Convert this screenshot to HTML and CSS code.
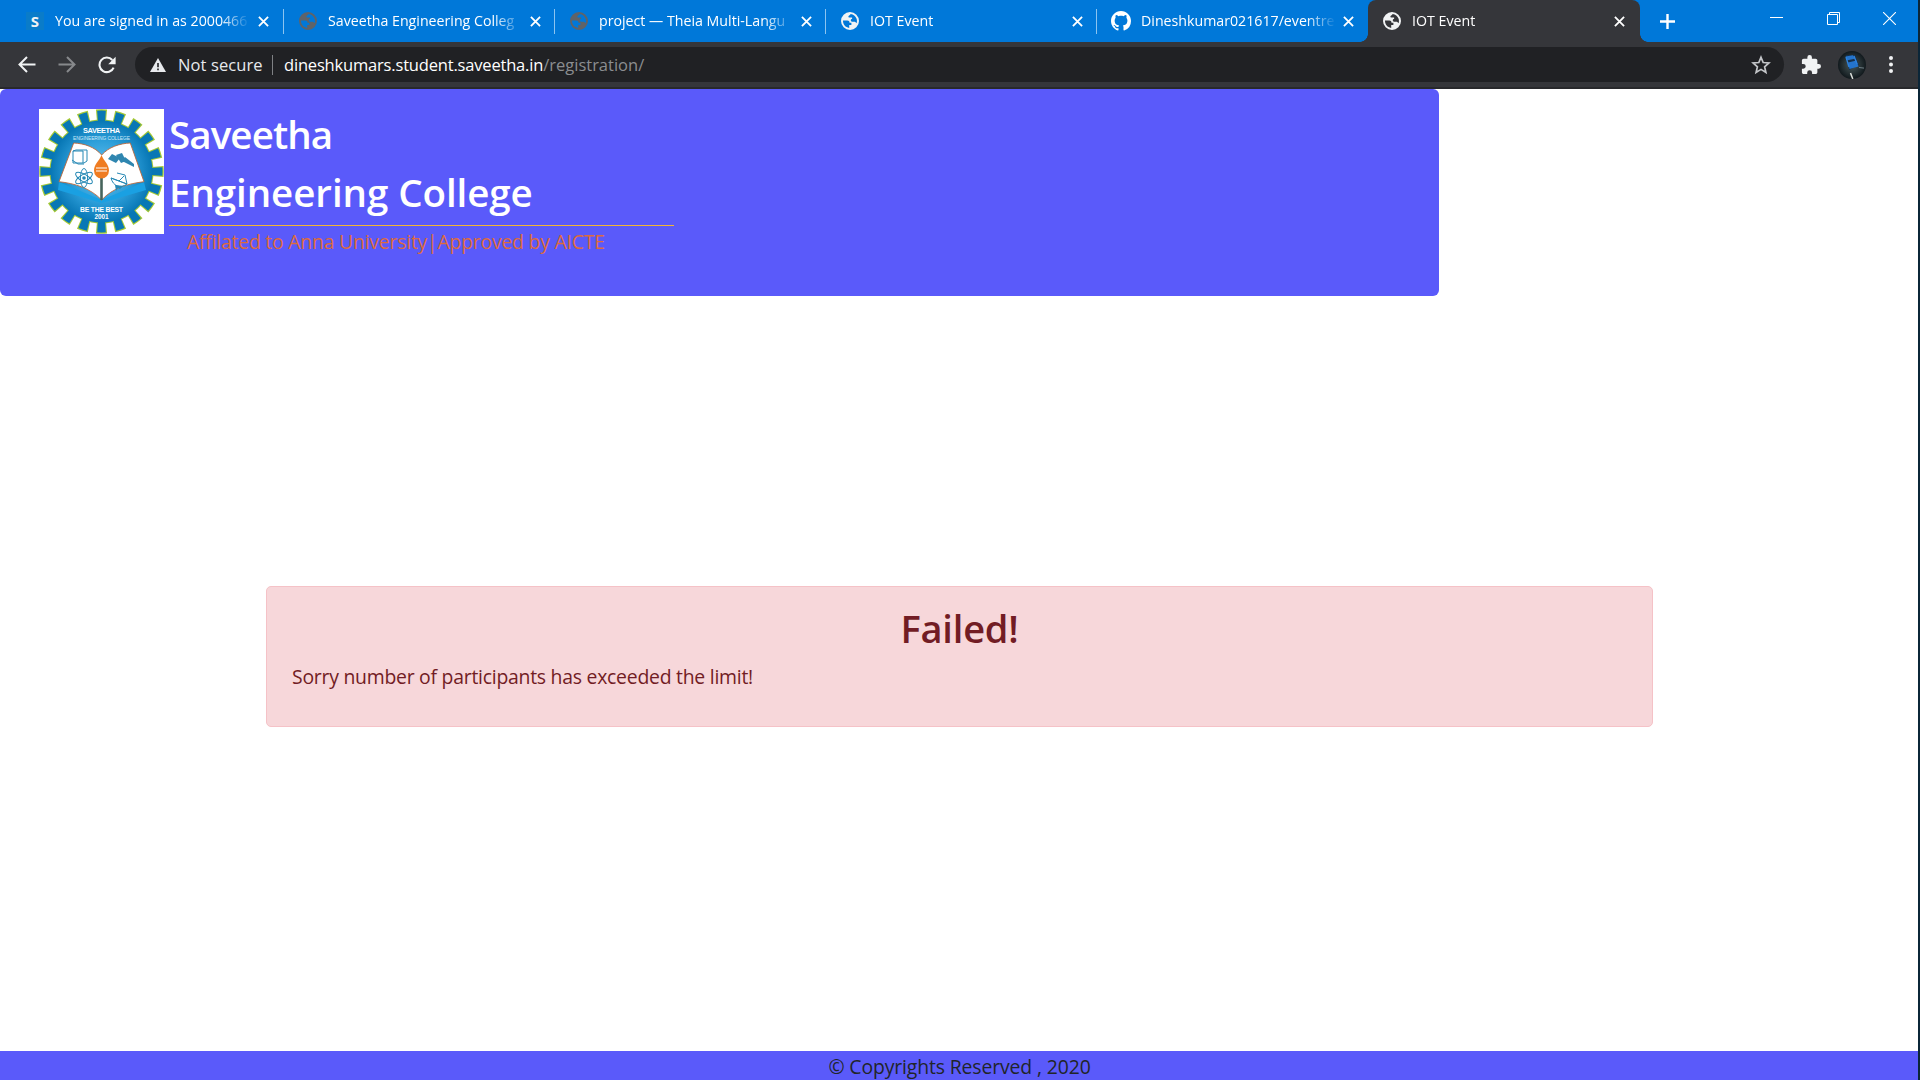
FILE: index.html
```
<!DOCTYPE html>
<html lang="en">
<head>
<meta charset="utf-8">
<title>IOT Event</title>
<link rel="stylesheet" href="styles.css">
</head>
<body>
<svg class="defs" width="0" height="0">
  <symbol id="globe" viewBox="0 0 18 18">
    <path fill-rule="evenodd" fill="currentColor" d="M9 0a9 9 0 1 0 0 18A9 9 0 0 0 9 0zM2 8.6h4.3c1.500 0 2.200.9 2.200 2.200h1.900v2.200H8.200v2.900C4.500 15.600 1.900 12.500 2 8.600zM9.700 2.050c2.700.3 4.900 2.100 5.900 4.700.5 1.700.4 3.300 0 4.500-.6-.9-1.300-1.500-2.400-1.500h-2.100c-.9 0-1.300-.6-1.300-1.400 0-.9.5-1.400 1.300-1.400V5.600H8.400c-.7 0-1-.4-1-1 0-1 1.300-1 2.300-2.550z"/>
  </symbol>
  <symbol id="close" viewBox="0 0 12 12">
    <path d="M1 1l10 10M11 1L1 11" fill="none" stroke="#fff" stroke-width="2"/>
  </symbol>
</svg>

<div class="window">
  <header class="tabstrip">
    <div class="tab">
      <span class="favicon favicon-s">S</span>
      <span class="tab-title">You are signed in as 2000466</span>
      <svg class="tab-close"><use href="#close"/></svg>
    </div>
    <div class="tab">
      <svg class="favicon dim"><use href="#globe"/></svg>
      <span class="tab-title">Saveetha Engineering Colleg</span>
      <svg class="tab-close"><use href="#close"/></svg>
    </div>
    <div class="tab">
      <svg class="favicon dim"><use href="#globe"/></svg>
      <span class="tab-title">project — Theia Multi-Langu</span>
      <svg class="tab-close"><use href="#close"/></svg>
    </div>
    <div class="tab">
      <svg class="favicon"><use href="#globe"/></svg>
      <span class="tab-title">IOT Event</span>
      <svg class="tab-close"><use href="#close"/></svg>
    </div>
    <div class="tab last">
      <svg class="favicon github" viewBox="0 0 16 16"><path fill="#fff" d="M8 0C3.580 0 0 3.580 0 8c0 3.540 2.290 6.530 5.470 7.590.4.07.55-.17.55-.38 0-.19-.01-.82-.01-1.490-2.010.37-2.530-.49-2.690-.94-.09-.23-.48-.94-.82-1.130-.28-.15-.68-.52-.01-.53.63-.01 1.080.58 1.230.82.72 1.210 1.870.87 2.330.66.07-.52.28-.87.51-1.070-1.780-.2-3.640-.89-3.640-3.950 0-.87.31-1.590.82-2.150-.08-.2-.36-1.020.08-2.120 0 0 .67-.21 2.200.82.64-.18 1.320-.27 2-.27s1.360.09 2 .27c1.530-1.040 2.200-.82 2.200-.82.44 1.100.16 1.920.08 2.120.51.56.82 1.270.82 2.150 0 3.070-1.870 3.750-3.650 3.950.29.25.54.73.54 1.480 0 1.070-.01 1.930-.01 2.200 0 .21.15.46.55.38A8.010 8.010 0 0 0 16 8c0-4.420-3.580-8-8-8z"/></svg>
      <span class="tab-title">Dineshkumar021617/eventre</span>
      <svg class="tab-close"><use href="#close"/></svg>
    </div>
    <div class="tab active">
      <svg class="favicon"><use href="#globe"/></svg>
      <span class="tab-title">IOT Event</span>
      <svg class="tab-close"><use href="#close"/></svg>
    </div>
    <svg class="new-tab" viewBox="0 0 15 15"><path d="M7.500 0v15M0 7.500h15" stroke="#fff" stroke-width="2.400"/></svg>
    <div class="controls">
      <svg width="13" height="13"><path d="M0 5.500h13" stroke="#fff"/></svg>
      <svg width="13" height="13"><path d="M.5 2.500h10v10H.5zM2.500 2.500v-2h10v10h-2" fill="none" stroke="#fff"/></svg>
      <svg width="13" height="13"><path d="M0 0l13 13M13 0L0 13" stroke="#fff" stroke-width="1.100"/></svg>
    </div>
  </header>

  <nav class="toolbar">
    <div class="nav-buttons">
      <svg width="18" height="17" viewBox="0 0 18 17"><path d="M17.500 8.500H2M9 1L1.500 8.500 9 16" fill="none" stroke="#f1f3f4" stroke-width="2"/></svg>
      <svg width="18" height="17" viewBox="0 0 18 17"><path d="M.5 8.500H16M9 1l7.500 7.500L9 16" fill="none" stroke="#87898c" stroke-width="2"/></svg>
      <svg width="18" height="18" viewBox="0 0 18 18"><path d="M15.600 11.600A7.300 7.300 0 1 1 14.300 4" fill="none" stroke="#f1f3f4" stroke-width="2.100"/><path d="M17.600.8v7.400h-7.400z" fill="#f1f3f4"/></svg>
    </div>
    <div class="omnibox">
      <svg class="warning" viewBox="0 0 16 14"><path d="M8 0l8 14H0z" fill="#e8eaed"/><path d="M8 5v4.200M8 10.500v1.800" stroke="#202124" stroke-width="1.600"/></svg>
      <span class="not-secure">Not secure</span>
      <span class="divider"></span>
      <span class="url">dineshkumars.student.saveetha.in</span><span class="path">/registration/</span>
      <svg class="star" viewBox="0 0 20 20"><path d="M10 2.300l2.200 5.200 5.700.5-4.300 3.800 1.300 5.600L10 14.400l-4.900 3 1.300-5.600L2.100 8l5.700-.5z" fill="none" stroke="#c4c6c9" stroke-width="1.700"/></svg>
    </div>
    <svg class="puzzle" viewBox="1 1 22 22"><path fill="#f1f3f4" d="M20.500 11H19V7c0-1.100-.9-2-2-2h-4V3.500a2.500 2.500 0 0 0-5 0V5H4c-1.100 0-2 .9-2 2v3.800h1.500a2.700 2.700 0 0 1 0 5.400H2V20c0 1.100.9 2 2 2h3.800v-1.500a2.700 2.700 0 0 1 5.400 0V22H17c1.100 0 2-.9 2-2v-4h1.500a2.500 2.500 0 0 0 0-5z"/></svg>
    <svg class="avatar" viewBox="0 0 28 28">
      <defs>
        <radialGradient id="road"><stop offset="0" stop-color="#4a5a5b"/><stop offset="1" stop-color="#11191d"/></radialGradient>
        <clipPath id="round"><circle cx="14" cy="14" r="14"/></clipPath>
      </defs>
      <g clip-path="url(#round)">
        <path fill="url(#road)" d="M0 0h28v28H0z"/>
        <path fill="#15304c" d="M8 4l9 0 4 10-10 5z"/>
        <path fill="#2474cc" d="M7.500 5.500l7.500-1.200 2 3.400-7.500 1.500zM10 11.500l8.500-2 2 6-9 2.500z"/>
        <path d="M8 6l3 10M16 5l3 8" stroke="#2e82dc" stroke-width="1.400"/>
        <path d="M21 16.500l5 .6" stroke="#6f7f86"/>
        <path d="M12.500 22l2.300 6" stroke="#dde0dc" stroke-width="1.500"/>
      </g>
    </svg>
    <svg class="menu" width="4" height="17"><g fill="#f1f3f4"><circle cx="2" cy="2" r="2"/><circle cx="2" cy="8.500" r="2"/><circle cx="2" cy="15" r="2"/></g></svg>
  </nav>

  <main class="page">
    <section class="banner">
      <svg class="logo" viewBox="0 0 125 125">
        <defs>
          <radialGradient id="disc"><stop offset="0" stop-color="#6cc4f0"/><stop offset=".6" stop-color="#2d9fda"/><stop offset="1" stop-color="#0877b5"/></radialGradient>
        </defs>
        <path fill="#fff" d="M0 0h125v125H0z"/>
        <circle class="teeth-edge" cx="62.500" cy="62.500" r="56.500" pathLength="200"/>
        <circle cx="62.500" cy="62.500" r="52" fill="#a5c935"/>
        <circle class="teeth" cx="62.500" cy="62.500" r="55.500" pathLength="200"/>
        <circle cx="62.500" cy="62.500" r="51" fill="url(#disc)"/>
        <path fill="#1aa0e2" d="M20 73l42.500 18L105 73l2 8-44.500 13L19 81z"/>
        <path fill="#fff" stroke="#b9683c" stroke-width=".9" d="M34.700 34c11 .5 21 4 28 12 7-8 18-11.500 28.600-12L105 72.700c-16 2-31 6-42.300 18.300C51 79 36 74.500 20 72.700z"/>
        <path d="M62.500 68v23" stroke="#46645c" stroke-width="2.600"/>
        <g fill="none" stroke="#2789b5" stroke-width="1">
          <path d="M34 42l3-1h11v11l-3 2H34zM34 42h10v12M33 51l6 4h6"/>
          <ellipse cx="45" cy="69" rx="3.600" ry="9.500"/>
          <ellipse cx="45" cy="69" rx="3.600" ry="9.500" transform="rotate(60 45 69)"/>
          <ellipse cx="45" cy="69" rx="3.600" ry="9.500" transform="rotate(120 45 69)"/>
          <path d="M72 69c2 8 9 11 16 6zM72 69l16 6M88 75l-2-9-8-2M80 72l5-5"/>
        </g>
        <circle cx="45" cy="69" r="1.800" fill="#2789b5"/>
        <path fill="#2789b5" d="M76 76l8 1-3 3-2-1-2 3z"/>
        <g fill="#2f86b0">
          <path d="M69 50l4-5 8 4-4 5zM83 52l3-4 9 7v3zM77 46l6-2 4 8-5 2z"/>
        </g>
        <path fill="#ef7c22" d="M62.500 46c2 6 7.500 9 7.500 15.500a7.500 8 0 0 1-15 0C55 55 60.500 52 62.500 46z"/>
        <path d="M57 59h11M57 62h11" stroke="#fff" stroke-width="1.200"/>
        <g class="logo-text">
          <text x="62.500" y="24" font-size="7.400" textLength="37">SAVEETHA</text>
          <text class="thin" x="62.500" y="31" font-size="4.900" textLength="57">ENGINEERING COLLEGE</text>
          <text x="62.500" y="102.500" font-size="6.800" textLength="43">BE THE BEST</text>
          <text x="62.500" y="110" font-size="6.400" textLength="14">2001</text>
        </g>
      </svg>
      <div class="heading">
        <h1><span class="name-first">Saveetha</span><br>Engineering College</h1>
        <p class="affiliation">Affilated to Anna University|Approved by AICTE</p>
      </div>
    </section>
    <section class="alert">
      <h2>Failed!</h2>
      <p>Sorry number of participants has exceeded the limit!</p>
    </section>
    <footer class="footer">© Copyrights Reserved , 2020</footer>
  </main>
</div>
</body>
</html>
```
FILE: styles.css
```
* { box-sizing: border-box; }
body {
  margin: 0;
  height: 1080px;
  overflow: hidden;
  background: #0b2638;
  font-family: "Open Sans", "Noto Sans", sans-serif;
  font-size: 19.4px;
  line-height: 30px;
}
h1, h2, p { margin: 0; }
svg { display: block; flex: none; }
.defs { position: absolute; }
.window {
  display: flex;
  flex-direction: column;
  width: 1918px;
  height: 1080px;
  background: #fff;
}

/* Tab strip */
.tabstrip {
  display: flex;
  height: 42px;
  padding-left: 13px;
  background: #0078d9;
  color: #fff;
}
.tab {
  display: flex;
  align-items: center;
  position: relative;
  flex: none;
  width: 271px;
  padding-left: 15px;
}
.tab:first-child { padding-left: 13px; }
.tab:not(.last):not(.active)::after {
  content: "";
  position: absolute;
  right: 0;
  top: 9px;
  width: 1px;
  height: 25px;
  background: #8cc4f0;
}
.favicon {
  width: 18px;
  height: 18px;
  flex: none;
  color: #f1f3f4;
}
.favicon.dim { color: #5f6368; }
.favicon.github { width: 20px; height: 20px; margin: 0 -1px; }
.favicon-s {
  background: #0a7cc9;
  font-size: 15px;
  font-weight: 700;
  line-height: 18px;
  text-align: center;
}
.tab-title {
  width: 195px;
  margin-left: 11px;
  white-space: nowrap;
  font-size: 14.2px;
  -webkit-mask-image: linear-gradient(90deg, #000 165px, transparent 195px);
  mask-image: linear-gradient(90deg, #000 165px, transparent 195px);
}
.tab-close { width: 11px; height: 11px; margin-left: 7px; }
.tab:first-child .tab-close { margin-left: 8px; }
.active {
  width: 272px;
  background: #35363a;
  border-radius: 8px 8px 0 0;
}
.active::before, .active::after {
  content: "";
  position: absolute;
  bottom: 0;
  width: 8px;
  height: 8px;
}
.active::before { left: -8px; background: radial-gradient(circle at 0 0, transparent 7.5px, #35363a 8px); }
.active::after { right: -8px; background: radial-gradient(circle at 100% 0, transparent 7.5px, #35363a 8px); }
.new-tab { width: 15px; height: 15px; margin: 13.5px 0 0 20px; }
.controls {
  display: flex;
  gap: 43.5px;
  margin: 12px 22px 0 auto;
}

/* Toolbar */
.toolbar {
  display: flex;
  align-items: center;
  height: 47px;
  padding: 0 25px 0 18px;
  background: #35363a;
  border-bottom: 2px solid #28292c;
}
.nav-buttons {
  display: flex;
  align-items: center;
  gap: 22px;
  width: 117px;
}
.omnibox {
  display: flex;
  align-items: center;
  width: 1649px;
  height: 35px;
  padding: 0 13px 0 15px;
  border-radius: 18px;
  background: #202124;
  color: #fff;
  font-size: 16.5px;
}
.warning { width: 16px; height: 14px; }
.not-secure { width: 94px; margin-left: 12px; color: #e8eaed; letter-spacing: .1px; }
.divider { width: 1px; height: 20px; margin-right: 11px; background: #7f8184; }
.url { letter-spacing: -.18px; }
.path { color: #8b8d90; }
.star { width: 20px; height: 20px; margin-left: auto; }
.puzzle { width: 20px; height: 20px; margin-left: 17px; }
.avatar { width: 28px; height: 28px; margin-left: 17px; }
.menu { margin-left: auto; }

/* Page */
.page {
  display: flex;
  flex-direction: column;
  flex: 1;
}
.banner {
  display: flex;
  gap: 5px;
  width: 1439px;
  height: 207px;
  padding: 16px 0 0 39px;
  border-radius: 6px;
  background: #5a5afa;
}
.logo { width: 125px; height: 125px; margin-top: 4px; }
.teeth-edge, .teeth {
  fill: none;
  stroke: #a5c935;
  stroke-width: 11.5;
  stroke-dasharray: 5.8 4.2;
  stroke-dashoffset: 2.9;
}
.teeth {
  stroke: #0877b5;
  stroke-width: 11;
  stroke-dasharray: 4.6 5.4;
  stroke-dashoffset: 2.3;
}
.logo-text {
  fill: #fff;
  text-anchor: middle;
  font-family: "Liberation Sans", sans-serif;
  font-weight: 700;
}
.logo-text .thin { font-weight: 400; fill: #cfeaf8; }
.heading { width: 505px; }
h1 {
  height: 121px;
  border-bottom: 1px solid #f3b531;
  color: #fff;
  font-size: 38.5px;
  font-weight: 600;
  line-height: 58px;
  letter-spacing: -.07px;
}
.name-first { letter-spacing: -.9px; }
.affiliation { margin: 1px 0 0 18px; color: #dd6b3d; letter-spacing: -.22px; }
.alert {
  width: 1387px;
  height: 141px;
  margin: 290px 0 0 266px;
  padding: 17px 25px;
  border: 1px solid #f5c2c7;
  border-radius: 5px;
  background: #f7d7da;
  color: #721c24;
}
.alert h2 {
  height: 58px;
  font-size: 38px;
  font-weight: 600;
  line-height: 48px;
  letter-spacing: -.2px;
  text-align: center;
}
.alert p { letter-spacing: -.25px; }
.footer {
  height: 29px;
  margin-top: auto;
  padding-left: 1px;
  background: #5a5afa;
  color: #212529;
  letter-spacing: -.13px;
  line-height: 32px;
  text-align: center;
}
```
